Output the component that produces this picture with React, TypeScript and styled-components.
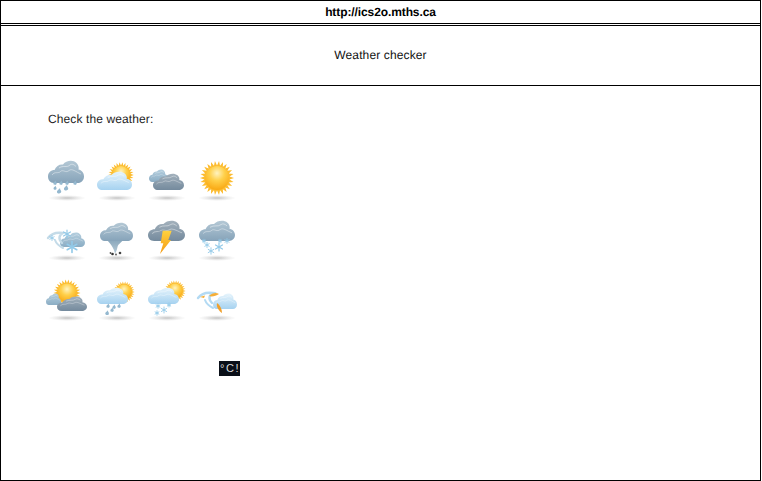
import React from "react";
import styled, { createGlobalStyle } from "styled-components";

const Global = createGlobalStyle`
  html, body { margin: 0; padding: 0; background: #fff; }
  body { font-family: "Liberation Sans", Arial, sans-serif; font-size: 12px; color: #000; text-rendering: geometricPrecision; }
`;
const Page = styled.div`
  box-sizing: border-box; width: 761px; height: 481px; border: 1px solid #000;
  display: flex; flex-direction: column; overflow: hidden;
`;
const Url = styled.header`
  height: 22px; border-bottom: 1px solid #000; font-weight: 700; letter-spacing: -0.1px;
  display: flex; align-items: center; justify-content: center;
`;
const Title = styled.div`
  margin-top: 1px; height: 57px; padding-bottom: 2px; border-top: 1px solid #000; border-bottom: 1px solid #000;
  display: flex; align-items: center; justify-content: center; color: #111; letter-spacing: 0.13px;
`;
const Main = styled.main`
  padding: 26px 0 0 40px; display: flex; flex-direction: column; align-items: flex-start;
`;
const Prompt = styled.p`
  margin: 0 0 29px 7px; line-height: 14px; color: #222; letter-spacing: 0.11px;
`;
const Grid = styled.div`
  display: grid; grid-template-columns: repeat(4, 50px); grid-auto-rows: 60px;
`;
const Art = styled.svg`
  display: block; width: 50px; height: 50px; overflow: visible;
  & > g { filter: blur(0.45px); }
`;
const Badge = styled.button`
  margin: 26px 0 0 178px; width: 21px; height: 15px; padding: 0 0 0 1px; border: 0;
  background: #0a0f18; color: #dcdcdc; font: 400 11px/15px "Liberation Sans", sans-serif;
  letter-spacing: 1.6px; text-align: center;
`;

const Defs = () => (
  <defs>
    <linearGradient id="gray" x1="0" y1="0" x2="0" y2="1">
      <stop offset="0" stopColor="#b4c8d5" /><stop offset="1" stopColor="#86a3b9" />
    </linearGradient>
    <linearGradient id="slate" x1="0" y1="0" x2="0" y2="1">
      <stop offset="0" stopColor="#a3b1bc" /><stop offset="1" stopColor="#748a9d" />
    </linearGradient>
    <linearGradient id="back" x1="0" y1="0" x2="0" y2="1">
      <stop offset="0" stopColor="#b4cede" /><stop offset="1" stopColor="#8badc4" />
    </linearGradient>
    <linearGradient id="sky" x1="0" y1="0" x2="0" y2="1">
      <stop offset="0" stopColor="#e6f4fc" /><stop offset="1" stopColor="#a6d2f0" />
    </linearGradient>
    <radialGradient id="core" cx="0.5" cy="0.3" r="0.7">
      <stop offset="0" stopColor="#fff3c0" /><stop offset="0.45" stopColor="#ffd04a" /><stop offset="1" stopColor="#f9a813" />
    </radialGradient>
    <linearGradient id="bolt" x1="0" y1="0" x2="0" y2="1">
      <stop offset="0" stopColor="#ffd23f" /><stop offset="1" stopColor="#f59a12" />
    </linearGradient>
    <radialGradient id="shade">
      <stop offset="0" stopColor="#a8a8a8" stopOpacity="0.7" /><stop offset="1" stopColor="#ccc" stopOpacity="0" />
    </radialGradient>
    <linearGradient id="funnel" x1="0" y1="0" x2="0" y2="1">
      <stop offset="0" stopColor="#86a5ba" /><stop offset="1" stopColor="#b9ccd8" />
    </linearGradient>
  </defs>
);

const Shadow = () => <ellipse cx={26} cy={43} rx={19} ry={3} fill="url(#shade)" />;

type CloudProps = { x: number; y: number; w: number; h: number; fill: string };
const Cloud = ({ x, y, w, h, fill }: CloudProps) => (
  <g transform={`translate(${x} ${y}) scale(${w / 36} ${h / 23})`}>
    <path
      d="M6 23C2 23 0 20 0 16.500C0 12.500 3 10 6.500 10C8 6 11.500 4 15 4.500C18 0.500 25 -0.500 28.500 3C30.500 5 31 7.500 30.500 9.500C33.500 10 36 12.500 36 16.500C36 20.500 33 23 30 23Z"
      fill={`url(#${fill})`}
    />
    <path d="M4 15C7 11 10 14 12.500 11.500C15 9 18 13.500 21 10.500C24 8 28 12 33 14" fill="none" stroke="#fff" strokeOpacity={0.4} strokeWidth={1} />
    <path d="M11 8C15 5 19 8 22 5C24 3.500 26 4.500 28 6.500" fill="none" stroke="#fff" strokeOpacity={0.5} strokeWidth={0.9} />
  </g>
);

const Sun = ({ x, y, r }: { x: number; y: number; r: number }) => {
  const spikes = 26;
  const pts = Array.from({ length: spikes * 2 }, (_, i) => {
    const radius = i % 2 ? r * 1.05 : r * 1.42;
    const a = (Math.PI * i) / spikes;
    return `${(x + radius * Math.cos(a)).toFixed(2)},${(y + radius * Math.sin(a)).toFixed(2)}`;
  }).join(" ");
  return (
    <g>
      <polygon points={pts} fill="#fcbc30" />
      <circle cx={x} cy={y} r={r} fill="url(#core)" />
    </g>
  );
};

const Drop = ({ x, y, s = 1 }: { x: number; y: number; s?: number }) => (
  <path transform={`translate(${x} ${y}) scale(${s})`} d="M0.800 -2.400C0.600 -1 2 -0.500 1.700 0.800C1.300 2.300 -1.300 2.200 -1.600 0.700C-1.800 -0.600 0 -1.200 0.800 -2.400Z" fill="#94b8cf" />
);

const Flake = ({ x, y, r, color = "#93cae8" }: { x: number; y: number; r: number; color?: string }) => (
  <g stroke={color} strokeWidth={Math.max(0.9, r * 0.3)} strokeLinecap="round">
    {[0, 60, 120].map((a) => {
      const t = (a * Math.PI) / 180 + Math.PI / 2;
      const dx = r * Math.cos(t);
      const dy = r * Math.sin(t);
      return <line key={a} x1={x - dx} y1={y - dy} x2={x + dx} y2={y + dy} />;
    })}
  </g>
);

const Swoosh = ({ color }: { color: string }) => (
  <g fill="none" stroke={color} strokeLinecap="round">
    <path d="M7 23C10 19 15 17 22 18C18 20 17 24 21 28" strokeWidth={2.4} />
    <path d="M14 25C15 28 18 31 22 33" strokeWidth={2} />
  </g>
);

const icons: React.ReactNode[] = [
  <>
    <Cloud x={7} y={5} w={36} h={23} fill="gray" />
    <Drop x={14} y={28} /><Drop x={20} y={28} /><Drop x={26} y={28} /><Drop x={34} y={28} />
    <Drop x={14} y={33} s={0.9} /><Drop x={18} y={36} s={1.3} /><Drop x={25} y={33} s={1.3} />
  </>,
  <>
    <Sun x={30} y={20} r={9} />
    <Cloud x={6} y={16} w={35} h={19} fill="sky" />
  </>,
  <>
    <Cloud x={8} y={14} w={19} h={13} fill="back" />
    <Cloud x={12} y={18} w={31} h={17} fill="slate" />
  </>,
  <Sun x={26} y={23} r={12} />,
  <>
    <Cloud x={19} y={17} w={25} h={15} fill="back" />
    <Swoosh color="#c4dbe8" />
    <Flake x={26} y={19} r={4} /><Flake x={31} y={32} r={5.5} /><Flake x={11} y={23} r={2.5} />
  </>,
  <>
    <path d="M15 24L33 24C30 28 27 29 26.500 32C26 35 25 37 24 39C23.500 35 21 30 15 24Z" fill="url(#funnel)" />
    <Cloud x={9} y={7} w={33} h={19} fill="gray" />
    <circle cx={21.500} cy={39} r={1.300} fill="#333" /><circle cx={29} cy={38} r={1.300} fill="#444" /><circle cx={19.500} cy={38} r={0.900} fill="#555" /><circle cx={25} cy={39.500} r={0.900} fill="#555" />
  </>,
  <>
    <Cloud x={7} y={5} w={37} h={21} fill="slate" />
    <polygon points="21.700,15.700 30.700,15.700 27.300,25 30,25 19,39 22.300,28.300 19.700,28.300" fill="url(#bolt)" />
  </>,
  <>
    <Cloud x={8} y={5} w={36} h={21} fill="gray" />
    <Flake x={16} y={30} r={2.5} /><Flake x={20} y={36} r={3.2} /><Flake x={28} y={32} r={4} /><Flake x={36} y={26} r={2.4} /><Flake x={13} y={26} r={1.8} /><Flake x={29} y={26} r={1.8} />
  </>,
  <>
    <Sun x={26} y={18} r={9.500} />
    <Cloud x={5} y={18} w={15} h={12} fill="back" />
    <Cloud x={16} y={21} w={30} h={15} fill="slate" />
  </>,
  <>
    <Sun x={33} y={17} r={7.500} />
    <Cloud x={6} y={12} w={31} h={17} fill="sky" />
    <Drop x={17} y={31} /><Drop x={28} y={31} /><Drop x={23} y={32} /><Drop x={21} y={35} /><Drop x={16} y={38} s={1.1} />
  </>,
  <>
    <Sun x={34} y={16} r={7.500} />
    <Cloud x={7} y={12} w={31} h={17} fill="sky" />
    <Flake x={17} y={31} r={2.2} /><Flake x={28} y={30} r={2} /><Flake x={23} y={35} r={3} /><Flake x={16} y={38} r={2.2} />
  </>,
  <>
    <Cloud x={22} y={18} w={24} h={16} fill="sky" />
    <Swoosh color="#b3daf3" />
    <path d="M18 21C21 18 25 17 28 19C25 21 21 22 18 21Z" fill="#f5ae38" />
    <path d="M26 28C29 30 31 34 31 38C28 36 25 32 26 28Z" fill="#f0a02c" />
    <path d="M9 22L14 20.500L13 23Z" fill="#f5ae38" />
  </>,
];

export default function App() {
  return (
    <>
      <Global />
      <Page>
        <Url>http://ics2o.mths.ca</Url>
        <Title>Weather checker</Title>
        <Main>
          <Prompt>Check the weather:</Prompt>
          <Grid>
            {icons.map((icon, i) => (
              <Art key={i} viewBox="0 0 50 50">
                <Defs />
                <g><Shadow />{icon}</g>
              </Art>
            ))}
          </Grid>
          <Badge type="button">°C!</Badge>
        </Main>
      </Page>
    </>
  );
}
